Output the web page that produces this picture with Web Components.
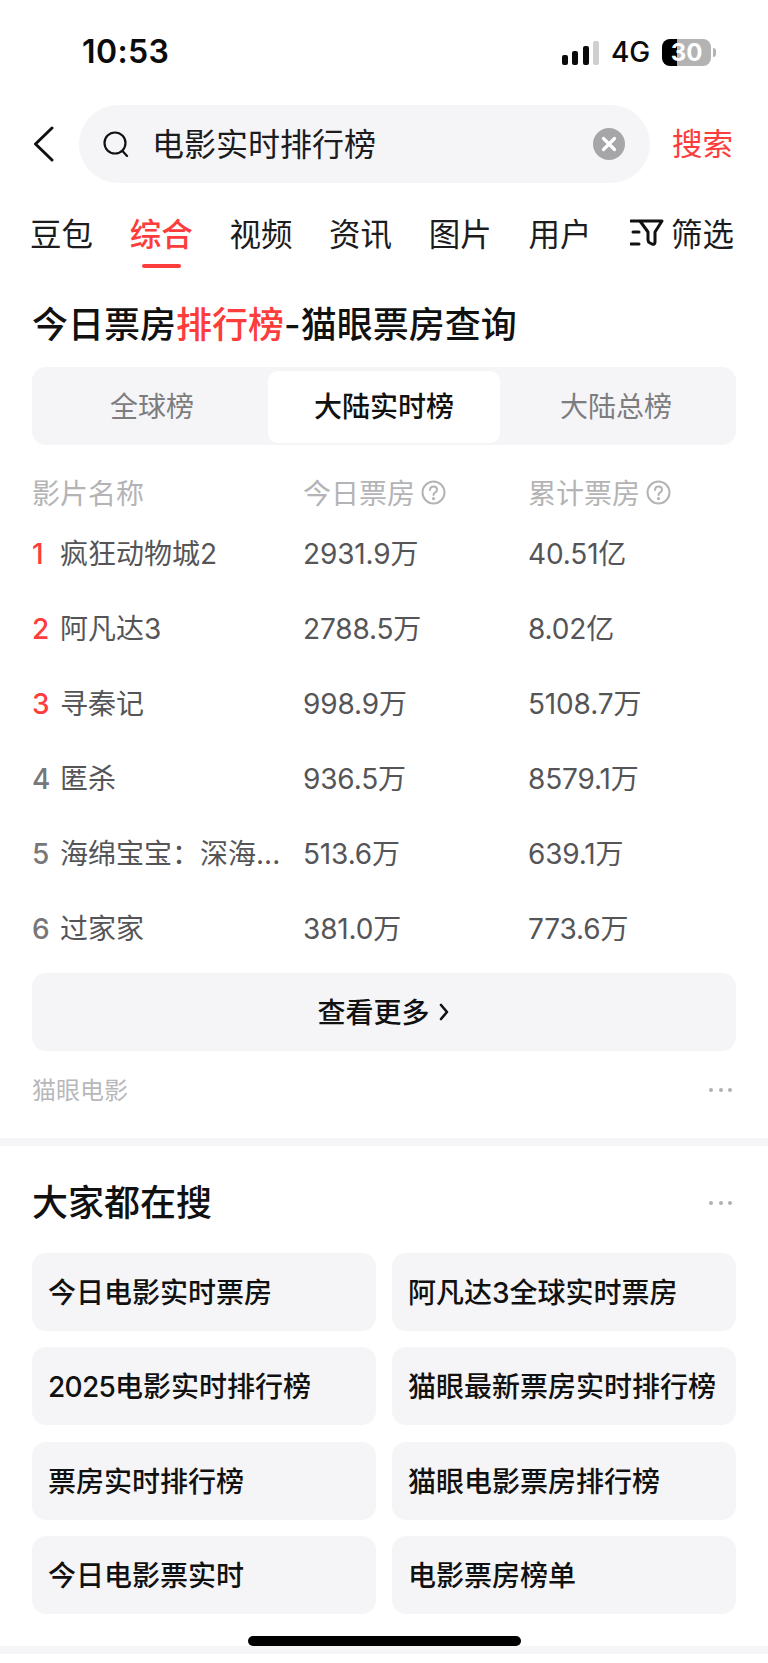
<!DOCTYPE html>
<html lang="zh">
<head>
<meta charset="utf-8">
<title>电影实时排行榜</title>
<style>
  body {
    margin: 0;
    background: #fff;
    color: #111;
    font-family: "Inter", "Noto Sans CJK SC", sans-serif;
  }
  app-page { width: 768px; height: 1663px; }
</style>
</head>
<body>
<app-page>
  <status-bar time="10:53" battery="30"></status-bar>
  <search-bar query="电影实时排行榜"></search-bar>
  <tab-strip></tab-strip>
  <rank-card></rank-card>
  <hot-search></hot-search>
  <home-bar></home-bar>
</app-page>

<script>
const CJK = '"Noto Sans CJK SC", sans-serif';
const RED = '#fd3c3c';
const PANEL = '#f5f5f7';

class AppPage extends HTMLElement {
  constructor() {
    super();
    this.shadowDOM = this.attachShadow({ mode: 'open' });
    this.shadowDOM.innerHTML = `
      <style>
        :host { display: block; position: relative; overflow: hidden; }
      </style>
      <slot></slot>`;
  }
}
customElements.define('app-page', AppPage);

class StatusBar extends HTMLElement {
  constructor() {
    super();
    this.shadowDOM = this.attachShadow({ mode: 'open' });
  }
  connectedCallback() {
    this.shadowDOM.innerHTML = `
      <style>
        :host {
          display: flex;
          align-items: center;
          height: 105px;
          box-sizing: border-box;
          padding: 0 52px 1px 82px;
          font-family: "Inter", sans-serif;
        }
        .time { font-size: 32px; font-weight: 600; letter-spacing: 0.4px; color: #0b0b0b; padding-bottom: 2px; }
        .right { margin-left: auto; display: flex; align-items: center; }
        .signal { display: flex; align-items: flex-end; gap: 4.5px; height: 25px; }
        .signal i { display: block; width: 6px; border-radius: 2px; background: #0b0b0b; }
        .net { font-size: 28px; font-weight: 500; margin: 0 12px; color: #0b0b0b; letter-spacing: -0.2px; }
        .bat {
          position: relative;
          width: 49px; height: 27px;
          border-radius: 8px;
          overflow: hidden;
          background: linear-gradient(to right, #000 31%, #b3b3b3 31%);
          color: #fff;
          font-size: 24px; font-weight: 700;
          line-height: 27px; text-align: center;
        }
        .nub { width: 3px; height: 9px; margin-left: 2px; border-radius: 0 3px 3px 0; background: #b3b3b3; }
      </style>
      <span class="time">${this.getAttribute('time')}</span>
      <div class="right">
        <div class="signal">
          <i style="height:10px"></i><i style="height:14px"></i><i style="height:19px"></i><i style="height:24px;background:#cfcfcf"></i>
        </div>
        <span class="net">4G</span>
        <div class="bat">${this.getAttribute('battery')}</div>
        <div class="nub"></div>
      </div>`;
  }
}
customElements.define('status-bar', StatusBar);

class SearchBar extends HTMLElement {
  constructor() {
    super();
    this.shadowDOM = this.attachShadow({ mode: 'open' });
  }
  connectedCallback() {
    this.shadowDOM.innerHTML = `
      <style>
        :host {
          display: flex;
          align-items: center;
          height: 78px;
          padding-left: 33px;
          font-family: ${CJK};
        }
        .back { flex: none; width: 21px; height: 36px; margin-right: 25px; }
        .field {
          flex: none;
          display: flex;
          align-items: center;
          width: 571px; height: 78px;
          box-sizing: border-box;
          padding: 0 25px 0 24px;
          border-radius: 39px;
          background: ${PANEL};
        }
        .field svg.glass { flex: none; width: 26px; height: 26px; margin-right: 23px; }
        .q { flex: 1; font-size: 32px; color: #1c1c1e; padding-bottom: 5px; }
        .clear { flex: none; width: 32px; height: 32px; }
        .go { margin-left: 22px; font-size: 30.5px; color: ${RED}; padding-bottom: 4px; }
      </style>
      <svg class="back" viewBox="0 0 21 36" fill="none" stroke="#111" stroke-width="3" stroke-linecap="round" stroke-linejoin="round">
        <path d="M19 2 L2.5 18 L19 34"/>
      </svg>
      <div class="field">
        <svg class="glass" viewBox="0 0 26 26" fill="none" stroke="#111" stroke-width="2.2" stroke-linecap="round">
          <circle cx="12" cy="12" r="10.5"/>
          <path d="M19.5 20 L24 25"/>
        </svg>
        <span class="q">${this.getAttribute('query')}</span>
        <svg class="clear" viewBox="0 0 32 32">
          <circle cx="16" cy="16" r="16" fill="#a6a6a9"/>
          <path d="M10.5 10.5 L21.5 21.5 M21.5 10.5 L10.5 21.5" stroke="#fff" stroke-width="3.2" stroke-linecap="round"/>
        </svg>
      </div>
      <span class="go">搜索</span>`;
  }
}
customElements.define('search-bar', SearchBar);

class TabStrip extends HTMLElement {
  constructor() {
    super();
    this.shadowDOM = this.attachShadow({ mode: 'open' });
    const tabs = ['豆包', '综合', '视频', '资讯', '图片', '用户'];
    this.shadowDOM.innerHTML = `
      <style>
        :host {
          display: flex;
          align-items: flex-start;
          height: 102px;
          box-sizing: border-box;
          padding: 27px 34px 0 30px;
          font-family: ${CJK};
          font-size: 31.5px;
          color: #1c1c1e;
        }
        .tab { position: relative; width: 63px; margin-right: 36.7px; line-height: 44px; white-space: nowrap; }
        .tab.on { color: ${RED}; font-weight: 500; }
        .tab.on::after {
          content: '';
          position: absolute;
          left: 12px; top: 54px;
          width: 39px; height: 4px;
          border-radius: 2px;
          background: ${RED};
        }
        .filter { margin-left: auto; display: flex; align-items: center; height: 44px; white-space: nowrap; }
        .filter svg { width: 34px; height: 27px; margin-right: 7px; margin-left: -4px; }
      </style>
      ${tabs.map(t => `<div class="tab${t === '综合' ? ' on' : ''}">${t}</div>`).join('')}
      <div class="filter">
        <svg viewBox="0 0 34 27" fill="none" stroke="#111" stroke-width="3" stroke-linecap="round" stroke-linejoin="round">
          <path d="M1 2 H9 M3 13 H9 M1 25 H9"/>
          <path d="M10 2 H32 L25 13 V23 Q25 26 22 25 L20 24 Q18 23 18 21 V13 Z"/>
        </svg>
        <span>筛选</span>
      </div>`;
  }
}
customElements.define('tab-strip', TabStrip);

class HelpIcon extends HTMLElement {
  constructor() {
    super();
    this.shadowDOM = this.attachShadow({ mode: 'open' });
    this.shadowDOM.innerHTML = `
      <style>
        :host { display: inline-flex; width: 25px; height: 25px; margin-left: 6px; }
        svg { width: 100%; height: 100%; }
      </style>
      <svg viewBox="0 0 25 25" fill="none" stroke="#b4b4b6" stroke-width="2" stroke-linecap="round">
        <circle cx="12.5" cy="12.5" r="11"/>
        <path d="M9 10 Q9 6.5 12.5 6.5 Q16 6.5 16 9.8 Q16 11.6 14 12.6 Q12.5 13.4 12.5 15"/>
        <circle cx="12.5" cy="18.6" r="0.6" fill="#b4b4b6"/>
      </svg>`;
  }
}
customElements.define('help-icon', HelpIcon);

class MoreDots extends HTMLElement {
  constructor() {
    super();
    this.shadowDOM = this.attachShadow({ mode: 'open' });
    this.shadowDOM.innerHTML = `
      <style>
        :host { display: inline-flex; gap: 5.5px; margin-left: auto; margin-right: 36px; }
        i { width: 4px; height: 4px; border-radius: 50%; background: #b0b0b3; }
      </style>
      <i></i><i></i><i></i>`;
  }
}
customElements.define('more-dots', MoreDots);

class RankRow extends HTMLElement {
  constructor() {
    super();
    this.shadowDOM = this.attachShadow({ mode: 'open' });
  }
  connectedCallback() {
    const rank = Number(this.getAttribute('rank'));
    this.shadowDOM.innerHTML = `
      <style>
        :host {
          display: grid;
          grid-template-columns: 271px 225px 1fr;
          align-items: center;
          height: 75px;
          font-size: 28px;
          line-height: 40px;
          letter-spacing: -0.15px;
          color: #555558;
        }
        .name { display: flex; align-items: baseline; min-width: 0; }
        .no { flex: none; width: 28px; color: ${rank <= 3 ? RED : '#77777a'}; font-weight: 500; }
        .title { white-space: nowrap; letter-spacing: 0; }
      </style>
      <div class="name"><span class="no">${rank}</span><span class="title">${this.getAttribute('name')}</span></div>
      <div>${this.getAttribute('today')}</div>
      <div>${this.getAttribute('total')}</div>`;
  }
}
customElements.define('rank-row', RankRow);

class RankCard extends HTMLElement {
  constructor() {
    super();
    this.shadowDOM = this.attachShadow({ mode: 'open' });
    const rows = [
      ['疯狂动物城2', '2931.9万', '40.51亿'],
      ['阿凡达3', '2788.5万', '8.02亿'],
      ['寻秦记', '998.9万', '5108.7万'],
      ['匿杀', '936.5万', '8579.1万'],
      ['海绵宝宝：深海...', '513.6万', '639.1万'],
      ['过家家', '381.0万', '773.6万']
    ];
    this.shadowDOM.innerHTML = `
      <style>
        :host {
          display: block;
          height: 861px;
          box-sizing: border-box;
          padding: 0 32px;
          font-family: "Inter", ${CJK};
          border-bottom: 8px solid ${PANEL};
        }
        h2 {
          margin: 0;
          height: 82px;
          line-height: 80px;
          font-size: 36px;
          font-weight: 500;
          color: #111;
          white-space: nowrap;
          font-family: "Inter", ${CJK};
        }
        h2 em { font-style: normal; color: ${RED}; }
        .seg {
          display: grid;
          grid-template-columns: 1fr 232px 1fr;
          height: 78px;
          box-sizing: border-box;
          padding: 4px 4px;
          border-radius: 14px;
          background: ${PANEL};
          font-size: 28px;
          color: #7d7d80;
          text-align: center;
          line-height: 72px;
        }
        .seg .on { border-radius: 10px; background: #fff; color: #111; font-weight: 500; }
        .head {
          display: grid;
          grid-template-columns: 271px 225px 1fr;
          align-items: center;
          height: 48px;
          margin: 23px 0 0;
          font-size: 28px;
          color: #b4b4b6;
        }
        .head div { display: flex; align-items: center; }
        .more {
          display: flex;
          align-items: center;
          justify-content: center;
          height: 78px;
          margin-top: 7px;
          border-radius: 14px;
          background: ${PANEL};
          font-size: 28px;
          font-weight: 500;
          color: #111;
        }
        .more span { padding-bottom: 3px; }
        .more svg { width: 10px; height: 20px; margin: 0 2px 0 9px; }
        .src {
          display: flex;
          align-items: center;
          height: 78px;
          font-size: 24px;
          color: #b8b8ba;
          margin-right: -32px;
        }
        .src span { padding-bottom: 4px; }
      </style>
      <h2>今日票房<em>排行榜</em>-猫眼票房查询</h2>
      <div class="seg"><div>全球榜</div><div class="on">大陆实时榜</div><div>大陆总榜</div></div>
      <div class="head">
        <div>影片名称</div>
        <div>今日票房<help-icon></help-icon></div>
        <div>累计票房<help-icon></help-icon></div>
      </div>
      <div class="rows">
        ${rows.map((r, i) => `<rank-row rank="${i + 1}" name="${r[0]}" today="${r[1]}" total="${r[2]}"></rank-row>`).join('')}
      </div>
      <div class="more"><span>查看更多</span>
        <svg viewBox="0 0 10 20" fill="none" stroke="#111" stroke-width="2.6" stroke-linecap="round" stroke-linejoin="round"><path d="M2 3 L8 10 L2 17"/></svg>
      </div>
      <div class="src"><span>猫眼电影</span><more-dots></more-dots></div>`;
  }
}
customElements.define('rank-card', RankCard);

class HotSearch extends HTMLElement {
  constructor() {
    super();
    this.shadowDOM = this.attachShadow({ mode: 'open' });
    const items = [
      '今日电影实时票房', '阿凡达3全球实时票房',
      '<b>2025</b>电影实时排行榜', '猫眼最新票房实时排行榜',
      '票房实时排行榜', '猫眼电影票房排行榜',
      '今日电影票实时', '电影票房榜单'
    ];
    this.shadowDOM.innerHTML = `
      <style>
        :host {
          display: block;
          padding: 0 32px;
          font-family: "Inter", ${CJK};
        }
        .top { display: flex; align-items: center; height: 107px; margin-right: -32px; }
        .top more-dots { margin-top: 6px; }
        h2 { margin: 0; font-size: 36px; font-weight: 500; color: #111; font-family: ${CJK}; }
        .grid {
          display: grid;
          grid-template-columns: 344px 344px;
          grid-auto-rows: 78px;
          column-gap: 16px;
          row-gap: 16.4px;
        }
        .chip {
          display: flex;
          align-items: center;
          box-sizing: border-box;
          padding: 0 0 2px 16px;
          border-radius: 14px;
          background: ${PANEL};
          font-size: 28px;
          font-weight: 500;
          color: #111;
          white-space: nowrap;
        }
        .chip b { font-weight: 500; letter-spacing: -0.7px; }
      </style>
      <div class="top"><h2>大家都在搜</h2><more-dots></more-dots></div>
      <div class="grid">${items.map(t => `<div class="chip"><span>${t}</span></div>`).join('')}</div>`;
  }
}
customElements.define('hot-search', HotSearch);

class HomeBar extends HTMLElement {
  constructor() {
    super();
    this.shadowDOM = this.attachShadow({ mode: 'open' });
    this.shadowDOM.innerHTML = `
      <style>
        :host {
          display: block;
          position: absolute;
          left: 0; right: 0; top: 1646px;
          height: 8px;
          background: ${PANEL};
        }
        i {
          position: absolute;
          left: 248px; top: -10px;
          width: 273px; height: 10px;
          border-radius: 5px;
          background: #000;
        }
      </style>
      <i></i>`;
  }
}
customElements.define('home-bar', HomeBar);
</script>
</body>
</html>
